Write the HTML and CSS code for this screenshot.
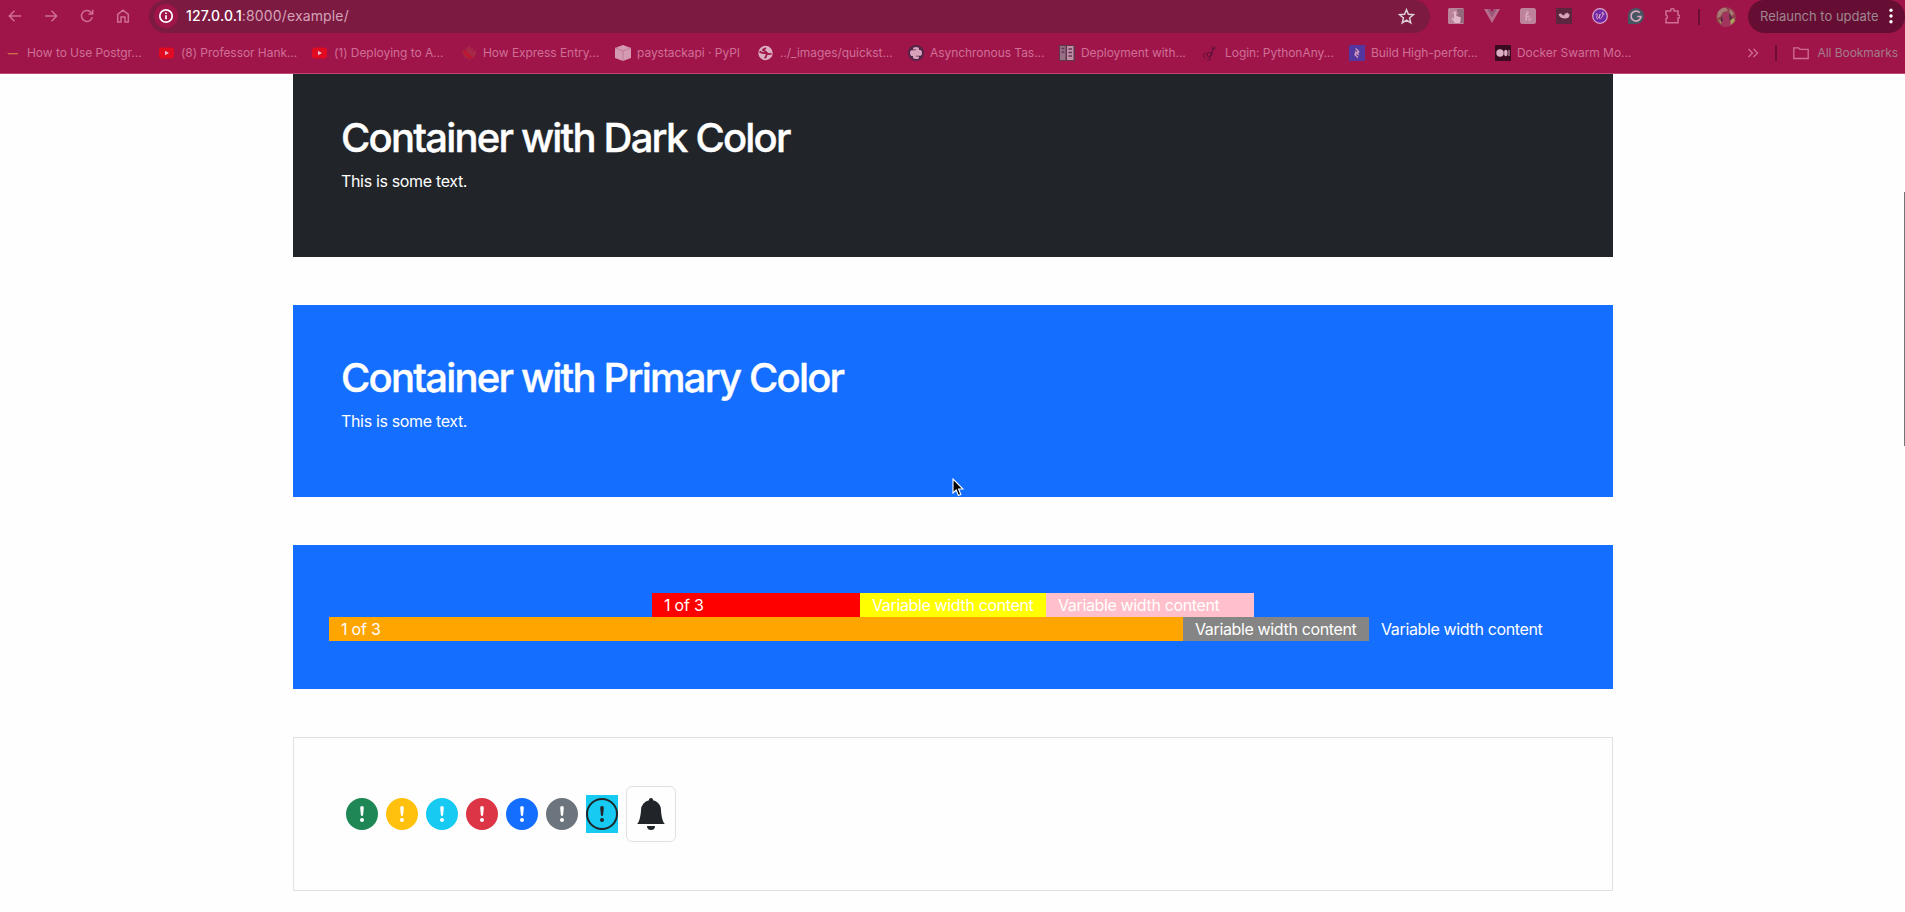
FILE: index.html
```
<!DOCTYPE html>
<html lang="en">
<head>
<meta charset="utf-8">
<title>Example</title>
<link rel="stylesheet" href="styles.css">
</head>
<body>
<svg class="defs" aria-hidden="true">
  <symbol id="exclaim" viewBox="0 0 16 16"><path d="M16 8A8 8 0 1 1 0 8a8 8 0 0 1 16 0zM8 4a.905.905 0 0 0-.9.995l.35 3.507a.552.552 0 0 0 1.1 0l.35-3.507A.905.905 0 0 0 8 4zm.002 6a1 1 0 1 0 0 2 1 1 0 0 0 0-2z"/></symbol>
  <symbol id="exclaim-open" viewBox="0 0 16 16"><path d="M8 15A7 7 0 1 1 8 1a7 7 0 0 1 0 14zm0 1A8 8 0 1 0 8 0a8 8 0 0 0 0 16z"/><path d="M7.002 11a1 1 0 1 1 2 0 1 1 0 0 1-2 0zM7.1 4.995a.905.905 0 1 1 1.8 0l-.35 3.507a.552.552 0 0 1-1.1 0L7.1 4.995z"/></symbol>
  <symbol id="bell" viewBox="0 0 16 16"><path d="M8 16a2 2 0 0 0 2-2H6a2 2 0 0 0 2 2zm.995-14.901a1 1 0 1 0-1.99 0A5.002 5.002 0 0 0 3 6c0 1.098-.5 6-2 7h14c-1.5-1-2-5.902-2-7 0-2.42-1.72-4.44-4.005-4.901z"/></symbol>
  <symbol id="youtube" viewBox="0 0 16 16"><rect y="2.5" width="15" height="11" rx="3" fill="#e00b20"/><path d="M6 5.800v4.400L10 8z" fill="#e7b6cb"/></symbol>
</svg>
<header class="browser">
  <div class="toolbar">
    <nav class="nav">
      <svg viewBox="0 0 16 16"><path d="M14 8H2.500M7.500 2.800 2.300 8l5.200 5.200"/></svg>
      <svg viewBox="0 0 16 16"><path d="M2 8h11.500M8.500 2.800 13.700 8l-5.200 5.200"/></svg>
      <svg viewBox="0 0 16 16"><path d="M13.300 9.200A5.500 5.500 0 1 1 12 4.200l1.500 1.500M13.700 1.800v4.200H9.500"/></svg>
      <svg viewBox="0 0 16 16"><path d="M2.700 14V6.300L8 2.200l5.300 4.100V14H10V9H6v5z"/></svg>
    </nav>
    <div class="address">
      <span class="info"><svg viewBox="0 0 16 16"><circle cx="8" cy="8" r="6.200"/><path d="M8 7.300v4M8 4.500v1.600"/></svg></span>
      <span class="url"><b>127.0.0.1</b>:8000/example/</span>
      <svg class="star" viewBox="0 0 16 16"><path d="m8 1.600 1.800 4.300 4.700.4-3.600 3.100 1.100 4.600L8 11.500 4 14l1.100-4.600-3.600-3.100 4.700-.4z"/></svg>
    </div>
    <div class="extensions">
      <svg viewBox="0 0 16 16"><rect width="16" height="16" rx="1.500" fill="#b9849a"/><path d="M9 1h7v14h-6z" fill="#94687d"/><path d="M6 4.200a1 1 0 0 1 2 0V8l4 1q1 .3.800 1.500L12 15H7L3.500 10.400l1-.7L6 11z" fill="#e3b7ca"/><path d="M4.500 6a2.500 2.500 0 1 1 5 0" fill="none" stroke="#d9a3b9" stroke-width=".8"/></svg>
      <svg viewBox="0 0 16 16"><path d="M0 1h6l2 3.500L10 1h6L8 15z" fill="#b96c8c"/><path d="M3.200 1H6l2 3.500L10 1h2.800L8 9.500z" fill="#985777"/></svg>
      <svg viewBox="0 0 16 16"><rect width="16" height="16" rx="2.500" fill="#bd839b"/><path d="M4.800 8.500C7.500 7 9 3.600 7.700 3.200 6.200 3 6.300 9 6 12.500 6.500 9 8.600 7 9.200 8.200c.5 1-1 4.300.2 4.300.8 0 1.500-1 1.800-2" fill="none" stroke="#e0b3c6"/></svg>
      <svg viewBox="0 0 16 16"><path d="M0 0h16v16H0z" fill="#5c2540"/><path d="M2.500 6.500q2-2 4 .5 1 .6 2 0 .2-2.500 2-1.500 1-2 1.500 0 2 0 1.500 2-.5 3-4.500 3-5 0-6.500-4z" fill="#d9a3b9"/></svg>
      <svg viewBox="0 0 16 16"><circle cx="8" cy="8" r="7.300" fill="#7126a5" stroke="#dca8c4" stroke-width="1.200"/><path d="M3.500 7C5 5 5.800 5.500 5 8c-.9 3.500.8 3.500 2 1L8.200 6C7 9.500 7.300 11 8.500 10.600 10.300 10 11.700 5 10.800 4c-1-.5-1.200 2.800 1.700 2.300" fill="none" stroke="#dca8c4"/></svg>
      <svg viewBox="0 0 16 16"><path d="M0 16V8a8 8 0 1 1 8 8z" fill="#465562"/><path d="M11.800 4.800A5 5 0 1 0 13 8.500H9.200" fill="none" stroke="#d6a8bd" stroke-width="1.700"/></svg>
      <svg viewBox="-1 0 16 16"><path d="M1 3h4.700v-.7a1.700 1.700 0 0 1 3.400 0V3H13v4h.5a1.500 1.500 0 0 1 0 3H13v4.800H1v-4a2 2 0 0 0 0-3.800z" fill="none" stroke="#d06e96" stroke-width="1.500"/></svg>
    </div>
    <i class="rule"></i>
    <svg class="avatar" viewBox="0 0 20 20"><circle cx="10" cy="10" r="10" fill="#914150"/><path d="M2 5q4-5 8-4l2 3-5 1-3 5-3 1zM14 2l4 4-2 3-3-3z" fill="#a77b73"/><path d="M7 7q3-4 6 0l-1 5 4 3-2 4-7 1-3-5 4-3z" fill="#a2345f"/><path d="m14 13 4-2 1 3-4 4zM2 12l4 3-1 2z" fill="#a8a05c"/><path d="m5 9 2 4-2 3zm8-4 3 6-2 3z" fill="#4c2841"/></svg>
    <div class="relaunch"><span>Relaunch to update</span><svg viewBox="0 0 4 16"><circle cx="2" cy="2.300" r="1.700"/><circle cx="2" cy="8" r="1.700"/><circle cx="2" cy="13.700" r="1.700"/></svg></div>
  </div>
  <div class="bookmarks">
    <a class="w1"><svg viewBox="0 0 16 16"><path d="M0 6.500 3 9h10q1-.5-1-1H3z" fill="#c52a3b"/><path d="M3 8.800h10" stroke="#d38750"/></svg><span>How to Use Postgr...</span></a>
    <a class="w2"><svg><use href="#youtube"/></svg><span>(8) Professor Hank...</span></a>
    <a class="w3"><svg><use href="#youtube"/></svg><span>(1) Deploying to A...</span></a>
    <a class="w4"><svg viewBox="0 0 16 16"><path d="m8 0 2 4 2-2-.5 5L15 4l-.5 3 1.500 1-4 5-3 .5L9 16H8l-.5-2.500L3 13l1-1.500L0 7l2-.5L1.500 5 5 7l-1-5 2 2z" fill="#a62847"/><path d="m1 7 4-1 7 7-4 .5z" fill="#bd1730"/></svg><span>How Express Entry...</span></a>
    <a class="w5"><svg viewBox="0 0 16 16"><path d="m8 0 8 3v10l-8 3-8-3V3z" fill="#d39ab2"/><path d="m0 3 8 3 8-3M8 6v10" fill="none" stroke="#be718f" stroke-width=".8"/></svg><span>paystackapi · PyPI</span></a>
    <a class="w6"><svg viewBox="0 0 16 16"><circle cx="7.500" cy="8" r="7.200" fill="#dcadc1"/><path d="M1.500 6.500Q4 8.500 6.500 8t2 2-2 3M13.500 8.500q-3 1.500-4.500-.5T5.500 5.500 8 3.200" fill="none" stroke="#9f154a" stroke-width="1.800"/></svg><span>../_images/quickst...</span></a>
    <a class="w7"><svg viewBox="0 0 16 16"><circle cx="8" cy="8" r="8" fill="#552449"/><path d="M5 3.500Q5 2 8 2t3 1.700V7L9.800 8H6.500L5.200 9.300V11H3.500Q2 10.500 2 8t1.500-2.700H8v-.8H5z" fill="#d9a3bb"/><path d="M11 12.500Q11 14 8 14t-3-1.700V9l1.200-1h3.300l1.300-1.300V5h1.700Q14 5.500 14 8t-1.500 2.700H8v.8h3z" fill="#d9a3bb"/></svg><span>Asynchronous Tas...</span></a>
    <a class="w8"><svg viewBox="0 0 16 16"><path d="M0 0h16v16H0z" fill="#5d3650"/><path d="M1 1h5.500v14H1z" fill="#987085"/><path d="M8 1h6.500v14H8z" fill="#c48da6"/><path d="M2.500 3.500h2.800M2.500 7h2.800M9.500 4H13M9.500 7.500H13M9.500 11H13" stroke="#5d3650" stroke-width="1.500"/></svg><span>Deployment with...</span></a>
    <a class="w9"><svg viewBox="0 0 16 16"><path d="M8.500 7.500 10 4l3-1.500M10.500 5 9.500 1M9.500 6.500q-.5 5-3 5.500T4 8.500q2.500-2.300 4-.5t-2 3.500M2 7.500Q-1 11 2 13.500M4 15.500q4-1 4-3" fill="none" stroke="#4c1237" stroke-width=".9"/></svg><span>Login: PythonAny...</span></a>
    <a class="w10"><svg viewBox="0 0 16 16"><path d="M0 0h16v16H0z" fill="#5436a0"/><path d="m6.500 3.500 3 2.800-3.700 3M9 12.500 6 9.700l4.200-3M6 6.500l4 3.500" fill="none" stroke="#d39ab8" stroke-width="1.300"/></svg><span>Build High-perfor...</span></a>
    <a class="w11"><svg viewBox="0 0 16 16"><rect width="16" height="16" rx="1" fill="#390a22"/><circle cx="5" cy="8" r="3.700" fill="#dcaec3"/><ellipse cx="10.800" cy="8" rx="1.700" ry="3.200" fill="#dcaec3"/><path d="M14 5v6" stroke="#dcaec3"/></svg><span>Docker Swarm Mo...</span></a>
    <div class="all">
      <svg class="more" viewBox="0 0 12 10"><path d="m1.500 1 4 4-4 4M6.500 1l4 4-4 4"/></svg>
      <i class="rule"></i>
      <svg class="folder" viewBox="0 0 16 14"><path d="M.8 1.800h4.700L7 3.300h8.200v9.200H.8z"/></svg>
      <span>All Bookmarks</span>
    </div>
  </div>
</header>
<main class="page">
  <section class="panel dark"><h1>Container with Dark Color</h1><p>This is some text.</p></section>
  <section class="panel primary"><h1>Container with Primary Color</h1><p>This is some text.</p></section>
  <section class="panel primary grid">
    <div class="row centered"><div class="col-lg-2 red">1 of 3</div><div class="col-auto yellow"><span>Variable width content</span></div><div class="col-lg-2 pink"><span>Variable width content</span></div></div>
    <div class="row"><div class="col orange">1 of 3</div><div class="col-auto gray"><span>Variable width content</span></div><div class="col-lg-2"><span>Variable width content</span></div></div>
  </section>
  <section class="panel icons">
    <svg class="success"><use href="#exclaim"/></svg>
    <svg class="warning"><use href="#exclaim"/></svg>
    <svg class="cyan"><use href="#exclaim"/></svg>
    <svg class="danger"><use href="#exclaim"/></svg>
    <svg class="blue"><use href="#exclaim"/></svg>
    <svg class="secondary"><use href="#exclaim"/></svg>
    <span class="tile"><svg><use href="#exclaim-open"/></svg></span>
    <span class="bell"><svg><use href="#bell"/></svg></span>
  </section>
</main>
<div class="scroll-thumb"></div>
<svg class="cursor" viewBox="0 0 12 19"><path d="M1 1v14l3.200-3 2.200 5.500 2.400-1L6.600 11H11z" fill="#000" stroke="#fff" stroke-width="1.100"/></svg>
</body>
</html>
```
FILE: styles.css
```
* { box-sizing: border-box; }
body {
  margin: 0;
  height: 912px;
  overflow: hidden;
  display: flex;
  flex-direction: column;
  background: #fefefe;
  font: 16px/24px Inter, "Liberation Sans", sans-serif;
}
svg { display: block; flex: none; }
.defs { display: none; }

/* Browser chrome */
.browser {
  flex: none;
  position: relative;
  z-index: 1;
  height: 74px;
  background: #9f154a;
  border-bottom: 1px solid #bc4876;
  color: #d06e96;
}
.toolbar { display: flex; height: 33px; align-items: center; }
.nav { display: flex; gap: 20px; padding: 0 0 1px 7px; width: 149px; }
.nav svg { width: 16px; height: 16px; fill: none; stroke: #d06e96; stroke-width: 1.5; }
.address {
  display: flex;
  align-items: center;
  width: 1281px;
  height: 33px;
  border-radius: 17px;
  background: #7c1a42;
  padding: 0 15px 1px 5px;
}
.info {
  width: 24px;
  height: 24px;
  border-radius: 50%;
  background: #9f154a;
  display: grid;
  place-items: center;
}
.info svg { width: 16px; height: 16px; fill: none; stroke: #fff; stroke-width: 1.7; }
.url { margin-left: 8px; flex: 1; font-size: 14px; letter-spacing: .14px; color: #d5a3b8; }
.url b { font-weight: 500; color: #fff; }
.star { width: 17px; height: 17px; fill: none; stroke: #ded1d7; stroke-width: 1.4; }
.extensions { display: flex; gap: 20px; margin-left: 18px; padding-bottom: 1px; }
.extensions svg { width: 16px; height: 16px; }
.rule { width: 2px; height: 16px; background: #6e0e38; flex: none; }
.toolbar > .rule { margin-left: 18px; }
.avatar { width: 20px; height: 20px; margin-left: 16px; }
.relaunch {
  display: flex;
  align-items: center;
  justify-content: space-between;
  width: 157px;
  height: 33px;
  margin-left: auto;
  padding: 0 12px 1px;
  border-radius: 17px;
  background: #660d33;
  color: #9e8790;
  font-size: 13px;
  white-space: nowrap;
}
.relaunch svg { width: 4px; height: 16px; fill: #fff; }
.bookmarks {
  display: flex;
  height: 40px;
  align-items: center;
  font-size: 12px;
  letter-spacing: -.05px;
  white-space: nowrap;
  padding-left: 5px;
}
.bookmarks a { display: flex; align-items: center; gap: 6px; flex: none; }
.bookmarks a svg { width: 16px; height: 16px; }
.w1 { width: 154px; }
.w2 { width: 153px; }
.w3 { width: 149px; }
.w4 { width: 154px; }
.w5 { width: 143px; }
.w6 { width: 150px; }
.w7 { width: 151px; }
.w8 { width: 144px; }
.w9 { width: 146px; }
.w10 { width: 146px; }
.w11 { width: 160px; }
.all { display: flex; align-items: center; margin-left: auto; padding-right: 7px; color: #a57b8b; }
.all svg { fill: none; stroke: #d06e96; stroke-width: 1.3; }
.more { width: 12px; height: 10px; margin-right: 16px; }
.folder { width: 16px; height: 14px; margin: 0 8px 0 16px; }

/* Page */
.page { width: 1320px; margin: -9.5px 0 0 293px; display: flex; flex-direction: column; gap: 48px; }
.panel { padding: 48px; color: #fff; flex: none; }
.dark { background: #212529; }
.primary { background: #146eff; }
h1 {
  margin: 0 0 6px;
  font-size: 40px;
  line-height: 50px;
  font-weight: 500;
  letter-spacing: -1.79px;
  -webkit-text-stroke: .4px currentColor;
}
p { margin: 0 0 16px; letter-spacing: -.34px; }
.row { display: flex; margin: 0 -12px; white-space: nowrap; letter-spacing: -.2px; }
.row span { letter-spacing: -.36px; }
.centered { justify-content: center; }
.row > div { padding: 0 12px; }
.col { flex: 1; }
.col-auto { width: 186px; }
.col-lg-2 { width: 16.6667%; }
.red { background: #f00; }
.yellow { background: #ff0; }
.pink { background: #ffc0cb; }
.orange { background: #ffa500; }
.gray { background: #858585; }
.icons {
  height: 154px;
  border: 1px solid #dee2e6;
  display: flex;
  align-items: center;
  gap: 8px;
  padding: 0 52px;
}
.icons svg { width: 32px; height: 32px; fill: currentColor; }
.success { color: #1e8755; }
.warning { color: #ffc10d; }
.cyan { color: #16caf1; }
.danger { color: #dc3546; }
.blue { color: #146eff; }
.secondary { color: #6c757d; }
.tile { height: 38px; padding: 3px 0; background: #16caf1; color: #212529; }
.bell {
  width: 50px;
  height: 56px;
  display: grid;
  place-items: center;
  border: 1px solid #dee2e6;
  border-radius: 6px;
  color: #212529;
}

/* Overlays */
.scroll-thumb { position: absolute; right: 0; top: 192px; width: 1px; height: 254px; background: #767676; }
.cursor { position: absolute; left: 952px; top: 478px; width: 12px; height: 19px; }
```
